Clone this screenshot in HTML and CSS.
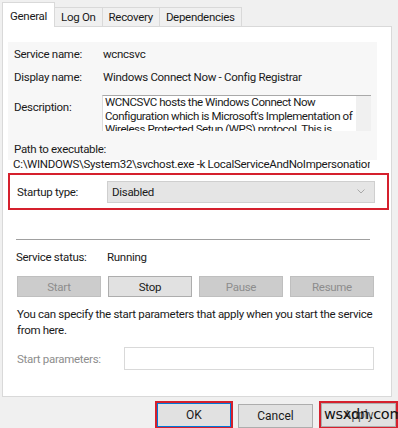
FILE: index.html
```html
<!DOCTYPE html>
<html lang="en">
<head>
    <meta charset="UTF-8">
    <title>Service Properties</title>
    <link rel="stylesheet" href="styles.css">
</head>
<body>
    <div class="dialog">
        <div class="tabs">
            <div class="tab active">General</div>
            <div class="tab">Log On</div>
            <div class="tab">Recovery</div>
            <div class="tab">Dependencies</div>
        </div>
        <div class="panel">
            <div class="info">
                <div class="row">
                    <span class="label">Service name:</span>
                    <span>wcncsvc</span>
                </div>
                <div class="row">
                    <span class="label">Display name:</span>
                    <span>Windows Connect Now - Config Registrar</span>
                </div>
                <div class="row desc-row">
                    <span class="label desc-label">Description:</span>
                    <div class="desc-box">
                        <div class="desc-text">WCNCSVC hosts the Windows Connect Now Configuration which is Microsoft's Implementation of Wireless Protected Setup (WPS) protocol. This is</div>
                        <div class="scroll-track"></div>
                    </div>
                </div>
                <div class="path-label">Path to executable:</div>
                <div class="path-value">C:\WINDOWS\System32\svchost.exe -k LocalServiceAndNoImpersonation</div>
            </div>

            <div class="startup highlight">
                <span class="label">Startup type:</span>
                <div class="select">
                    <span>Disabled</span>
                    <svg width="8" height="5" viewBox="0 0 8 5"><path d="M0.5 0.5 L4 4 L7.5 0.5" fill="none" stroke="#a8a8a8" stroke-width="1"/></svg>
                </div>
            </div>

            <div class="status">
                <div class="divider"></div>
                <div class="row status-row">
                    <span class="label">Service status:</span>
                    <span>Running</span>
                </div>
                <div class="buttons">
                    <button class="btn" disabled>Start</button>
                    <button class="btn">Stop</button>
                    <button class="btn" disabled>Pause</button>
                    <button class="btn" disabled>Resume</button>
                </div>
                <p class="hint">You can specify the start parameters that apply when you start the service from here.</p>
                <div class="params">
                    <span class="params-label">Start parameters:</span>
                    <div class="params-input"></div>
                </div>
            </div>
        </div>

        <div class="footer">
            <div class="highlight foot-box">
                <button class="dlg-btn default">OK</button>
            </div>
            <button class="dlg-btn cancel">Cancel</button>
            <div class="highlight foot-box apply-box">
                <button class="dlg-btn">Apply</button>
                <span class="watermark">wsxdn.com</span>
            </div>
        </div>
    </div>
</body>
</html>
```

FILE: styles.css
```css
body {
    margin: 0;
    padding: 0;
    background-color: #f0f0f0;
    font-family: Roboto, "Liberation Sans", sans-serif;
    font-size: 11.5px;
    letter-spacing: -0.3px;
    color: #1a1a1a;
}
.dialog {
    width: 398px;
    height: 428px;
    overflow: hidden;
}
.tabs {
    display: flex;
    align-items: flex-end;
    height: 26px;
    padding-left: 2px;
}
.tab {
    height: 19px;
    line-height: 18px;
    padding: 0 6px;
    border: 1px solid #d9d9d9;
    border-bottom: none;
    border-left: none;
    background: #f0f0f0;
    box-sizing: border-box;
}
.tab.active {
    height: 25px;
    line-height: 26px;
    padding: 0 7px;
    background: #fff;
    border-left: 1px solid #d9d9d9;
    margin-bottom: -1px;
    position: relative;
}
.panel {
    margin: 0 6px 0 2px;
    height: 371px;
    background: #fff;
    border: 1px solid #d9d9d9;
    box-sizing: border-box;
}
.info {
    margin: 15px 14px 0 5px;
    padding: 0 0 0 6px;
    background: linear-gradient(#f7f7f7 118px, #fff 118px);
}
.row {
    display: flex;
    align-items: center;
    height: 23px;
}
.label {
    width: 89px;
    flex-shrink: 0;
}
.desc-row {
    align-items: flex-start;
    height: 36px;
    margin-top: 7px;
}
.desc-label {
    padding-top: 5px;
}
.desc-box {
    display: flex;
    width: 269px;
    height: 36px;
    margin-left: -1px;
    border-top: 1px solid #a9a9a9;
    border-left: 1px solid #dcdcdc;
    background: #fff;
    box-sizing: border-box;
    overflow: hidden;
}
.desc-text {
    flex: 1;
    padding: 0 0 0 2px;
    line-height: 13.5px;
    letter-spacing: -0.45px;
}
.scroll-track {
    width: 15px;
    background: #f0f0f0;
}
.path-label {
    margin-top: 11px;
    line-height: 15px;
}
.path-value {
    line-height: 15px;
    white-space: nowrap;
    margin-left: -1px;
    width: 357px;
    overflow: hidden;
}
.highlight {
    border: 2px solid #d5202d;
}
.startup {
    display: flex;
    align-items: center;
    margin: 1px 2px 0 5px;
    height: 37px;
    padding-left: 7px;
    box-sizing: border-box;
}
.select {
    display: flex;
    align-items: center;
    justify-content: space-between;
    width: 268px;
    height: 22px;
    margin-left: 1px;
    padding: 0 9px 0 4px;
    background: #e5e5e5;
    border: 1px solid #cfcfcf;
    box-sizing: border-box;
}
.status {
    padding: 0 17px 0 13px;
}
.divider {
    margin-top: 29px;
    border-top: 1px solid #a0a0a0;
    width: 354px;
}
.status-row {
    margin-top: 8px;
    height: 17px;
}
.status-row .label {
    width: 91px;
}
.buttons {
    display: grid;
    grid-template-columns: repeat(4, 84px);
    gap: 7px;
    margin: 11px 0 0 1px;
}
.btn {
    height: 21px;
    font: inherit;
    letter-spacing: inherit;
    color: #1a1a1a;
    background: #e1e1e1;
    border: 1px solid #adadad;
    padding: 0;
}
.btn:disabled {
    background: #cccccc;
    border-color: #bfbfbf;
    color: #8d8d8d;
}
.hint {
    margin: 9px 0 0 1px;
    line-height: 16px;
}
.params {
    display: flex;
    align-items: center;
    margin: 9px 0 0 1px;
}
.params-label {
    width: 107px;
    color: #8d8d8d;
}
.params-input {
    width: 250px;
    height: 23px;
    border: 1px solid #d9d9d9;
    box-sizing: border-box;
}
.footer {
    display: flex;
    align-items: flex-start;
    margin-top: 4px;
    padding-left: 155px;
}
.foot-box {
    width: 78px;
    height: 28px;
    box-sizing: border-box;
    display: flex;
}
.dlg-btn {
    flex: 1;
    height: 24px;
    font: inherit;
    font-size: 12px;
    background: #e1e1e1;
    border: 1px solid #adadad;
    color: #1a1a1a;
    padding: 0;
}
.dlg-btn.default {
    border: 1px solid #0078d7;
}
.cancel {
    flex: none;
    width: 75px;
    height: 24px;
    margin: 3px 0 0 5px;
}
.apply-box {
    position: relative;
    width: 79px;
    margin-left: 6px;
}
.apply-box .dlg-btn {
    color: #555;
}
.watermark {
    position: absolute;
    left: 3px;
    top: 3px;
    font-family: "DejaVu Sans", sans-serif;
    font-size: 14.5px;
    color: #111;
    letter-spacing: -0.3px;
}
```
